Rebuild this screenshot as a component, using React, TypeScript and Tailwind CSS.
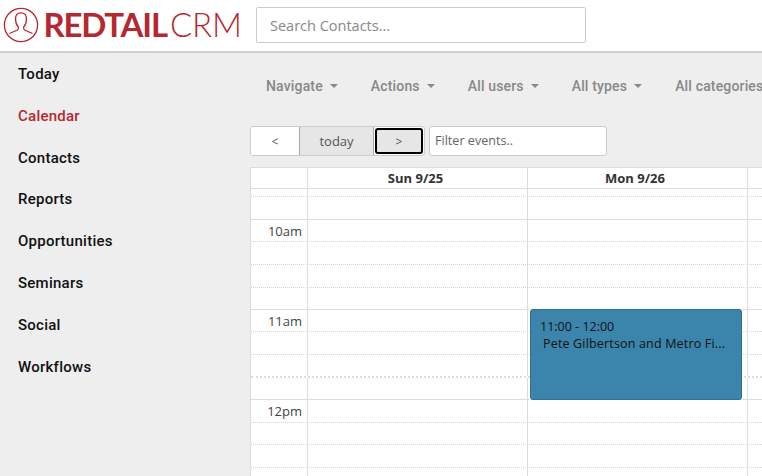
import React from "react";

const nav = ["Today", "Calendar", "Contacts", "Reports", "Opportunities", "Seminars", "Social", "Workflows"];
const menus = ["Navigate", "Actions", "All users", "All types", "All categories"];
const rows: { h: number; kind: "solid" | "dotted" | "thick" | "last"; label?: string }[] = [
  { h: 8, kind: "dotted" },
  { h: 23, kind: "solid" },
  { h: 22, kind: "dotted", label: "10am" },
  { h: 23, kind: "dotted" },
  { h: 23, kind: "dotted" },
  { h: 22, kind: "solid" },
  { h: 22, kind: "dotted", label: "11am" },
  { h: 23, kind: "dotted" },
  { h: 23, kind: "thick" },
  { h: 22, kind: "solid" },
  { h: 23, kind: "dotted", label: "12pm" },
  { h: 22, kind: "dotted" },
  { h: 23, kind: "dotted" },
  { h: 22, kind: "dotted" },
];

function Row({ h, kind, label }: { h: number; kind: string; label?: string }) {
  const border =
    kind === "solid"
      ? "border-b border-solid border-[#ddd]"
      : kind === "thick"
        ? "border-b-2 border-dotted border-[#ddd]"
        : "border-b border-dotted border-[#d4d4d4]";
  return (
    <div className={`flex ${border}`} style={{ height: h }}>
      <div className="w-[57px] shrink-0 border-r border-[#ddd] pr-[5px] pt-[1px] text-right text-[13px] leading-[20px] text-[#444]">
        {label}
      </div>
      <div className="w-[220px] shrink-0 border-r border-[#ddd]" />
      <div className="w-[220px] shrink-0 border-r border-[#ddd]" />
      <div className="flex-1" />
    </div>
  );
}

export default function App() {
  return (
    <div className="flex h-[476px] w-[762px] flex-col overflow-hidden bg-[#eeeeee] font-['Open_Sans',sans-serif]">
      <header className="flex h-[53px] shrink-0 items-center border-b-2 border-[#d2d2d2] bg-white pb-[2px]">
        <div className="ml-[2.5px] flex w-[253.5px] items-center">
          <svg width="36" height="36" viewBox="0 0 36 36" fill="none" stroke="#b5282f" strokeWidth="1.3">
            <circle cx="18" cy="18" r="16.6" />
            <path d="M6.5 26.5 14.5 23c.8-.5 1-1.5.8-3C13.5 18 12.5 15 12.5 12c0-4 2.5-6.1 5.5-6.1s5.5 2.1 5.5 6.1c0 3-1 6-2.8 8-.2 1.5 0 2.5.8 3l8 3.5" />
          </svg>
          <span className="ml-[5px] font-['Lato',sans-serif] text-[33px] leading-none font-bold tracking-[-1.2px] text-[#b5282f]">
            REDTAIL
          </span>
          <span className="ml-[3px] font-['Lato',sans-serif] text-[33px] leading-none font-light tracking-[-0.1px] text-[#b5282f]">
            CRM
          </span>
        </div>
        <input
          placeholder="Search Contacts..."
          className="mt-[1px] h-[36px] w-[330px] rounded-[2px] border border-[#ccc] bg-white px-[13px] text-[14.5px] outline-none placeholder:text-[#888]"
        />
      </header>
      <div className="flex min-h-0 flex-1">
        <nav className="flex w-[250px] shrink-0 flex-col pl-[18px] pt-[10px] font-['Roboto',sans-serif] text-[15px] font-medium tracking-[0.25px] text-[#111]">
          {nav.map((n) => (
            <div key={n} className={`h-[41.8px] leading-[22px] ${n === "Calendar" ? "text-[#b5282f]" : ""}`}>
              {n}
            </div>
          ))}
        </nav>
        <main className="min-w-0 flex-1 overflow-hidden">
          <div className="flex h-[73px] items-start gap-[33px] whitespace-nowrap pl-[16px] pt-[23px] font-['Roboto',sans-serif] text-[14px] font-medium tracking-[0.16px] text-[#888]">
            {menus.map((m) => (
              <span key={m} className="flex items-center gap-[7px] leading-[20px]">
                {m}
                <span className="h-0 w-0 border-x-[4px] border-t-[4px] border-x-transparent border-t-[#888]" />
              </span>
            ))}
          </div>
          <div className="flex h-[30px] items-stretch">
            <div className="flex rounded-[3px] border border-[#ccc] bg-white text-[12px] text-[#555]">
              <button className="w-[48px] rounded-l-[3px] bg-white pt-[2px]">&lt;</button>
              <button className="w-[75px] border-x border-[#aaa] bg-[#e6e6e6] pt-[2px] text-[13px]">today</button>
              <button className="m-[1px] w-[48px] rounded-[3px] border-2 border-black bg-[#e6e6e6] pt-[2px]">&gt;</button>
            </div>
            <input
              placeholder="Filter events.."
              className="ml-[4px] w-[178px] rounded-[3px] border border-[#ccc] bg-white px-[5px] pt-[1px] text-[12.6px] outline-none placeholder:text-[#666]"
            />
          </div>
          <div className="relative mt-[11px] border-t border-l border-[#ddd] bg-white">
            <div className="flex h-[21px] border-b border-[#ddd] text-[13px] leading-[20px] font-bold text-[#333]">
              <div className="w-[57px] shrink-0 border-r border-[#ddd]" />
              <div className="w-[220px] shrink-0 border-r border-[#ddd] pr-[4px] text-center">Sun 9/25</div>
              <div className="w-[220px] shrink-0 border-r border-[#ddd] pr-[5px] text-center">Mon 9/26</div>
              <div className="flex-1" />
            </div>
            {rows.map((r, i) => (
              <Row key={i} h={r.h} kind={r.kind} label={r.label} />
            ))}
            <div className="absolute left-[279px] top-[141px] h-[91px] w-[212px] rounded-[3px] border border-[#2f6f92] bg-[#3b85ad] px-[9px] pt-[8px] text-[12.5px] leading-[17px] text-[#111]">
              <div>11:00 - 12:00</div>
              <div className="whitespace-nowrap pl-[3px] font-medium tracking-[0.17px]">Pete Gilbertson and Metro Fi...</div>
            </div>
          </div>
        </main>
      </div>
    </div>
  );
}
